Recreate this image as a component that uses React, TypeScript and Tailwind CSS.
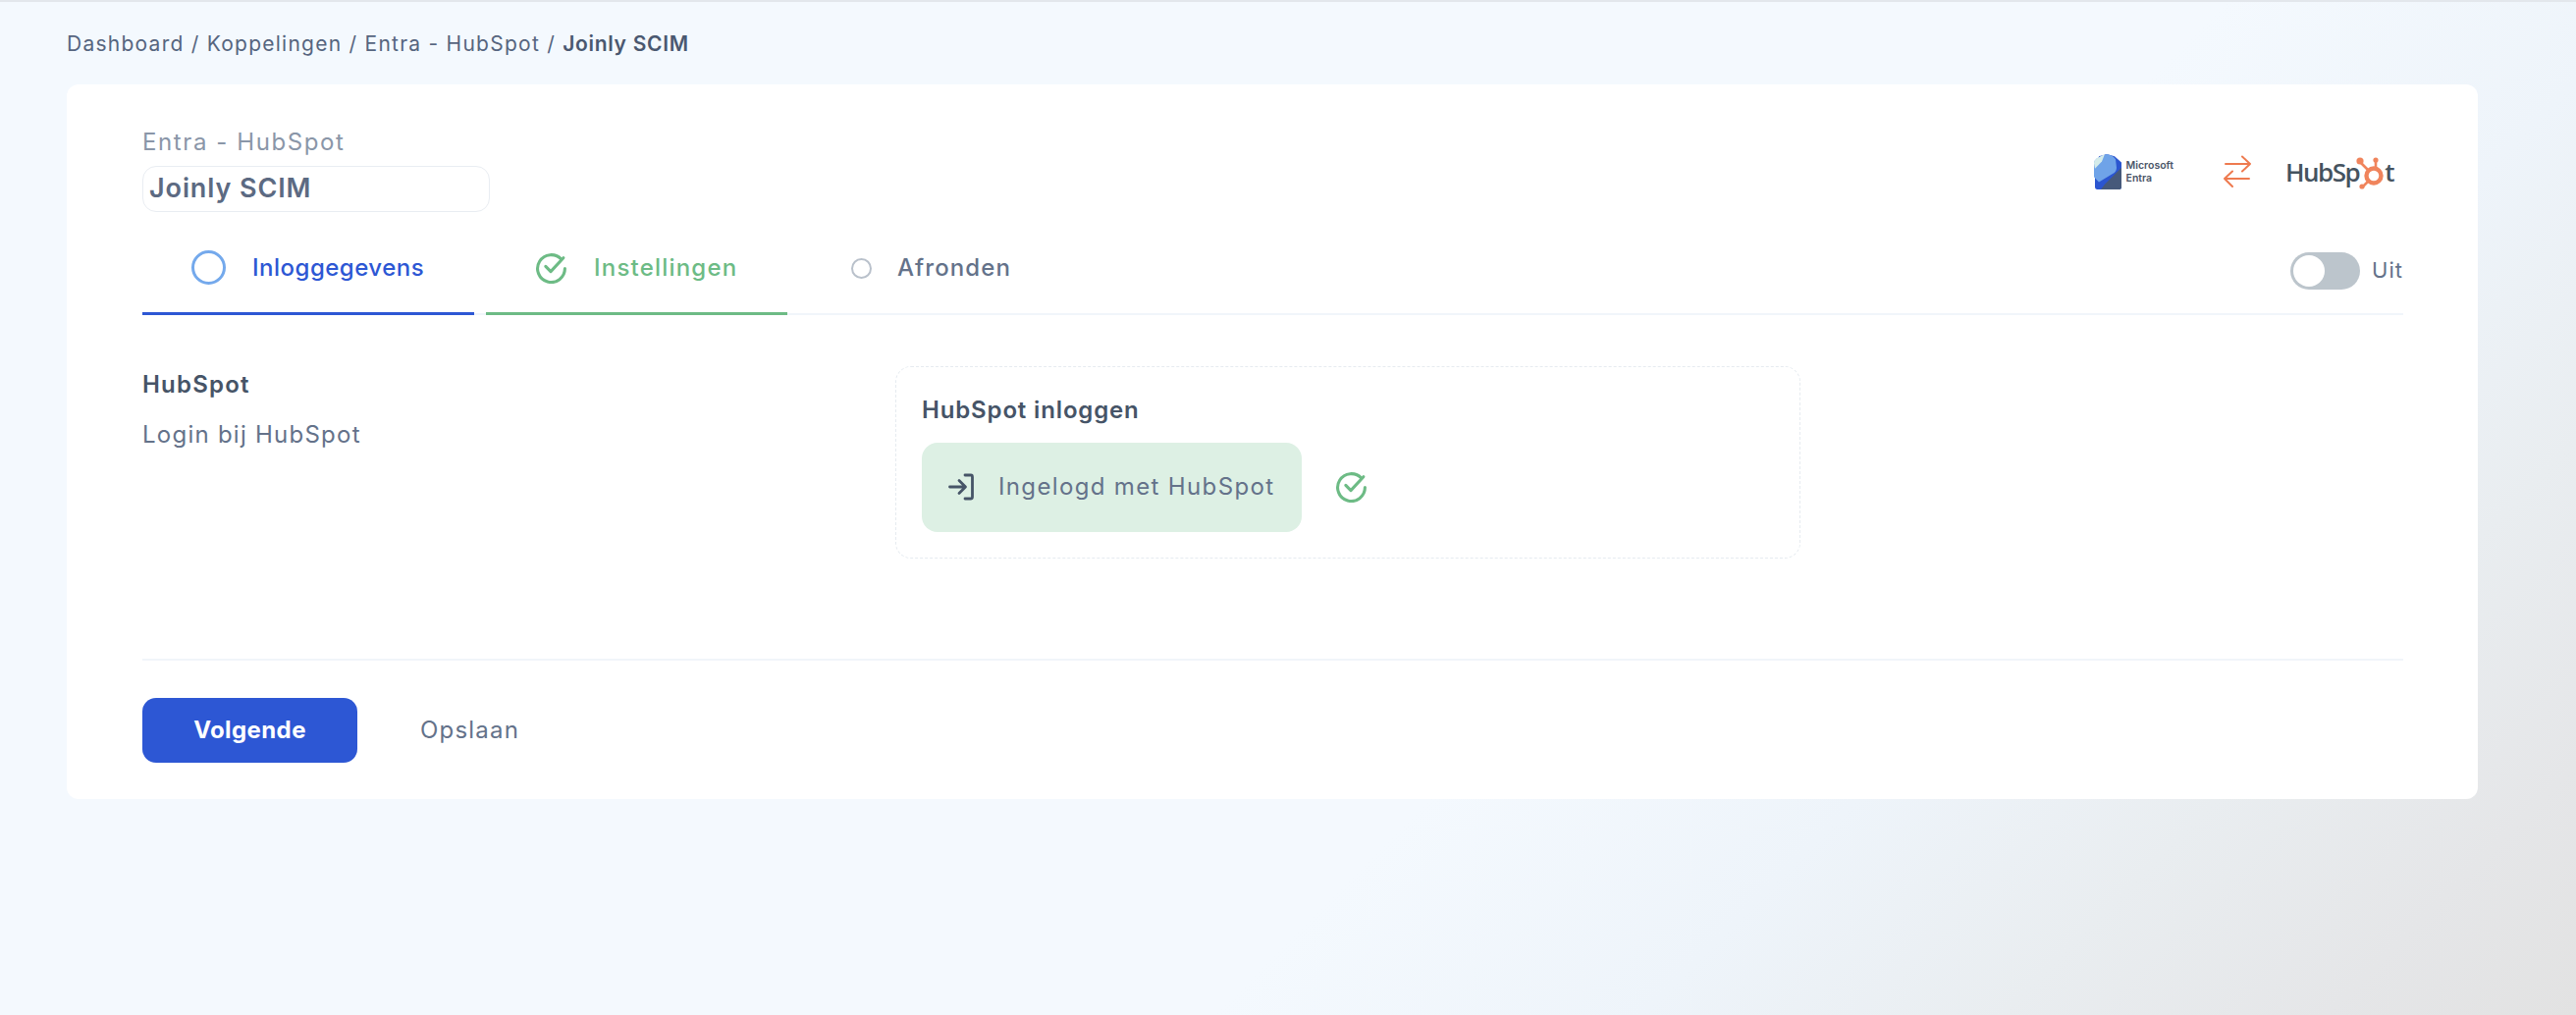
import React from 'react';

const FONT = "font-['Inter','Noto_Sans',sans-serif]";

const EntraLogo = () => (
  <div className="flex items-center gap-[4px]">
    <svg width="30" height="38" viewBox="0 0 30 36" preserveAspectRatio="none">
      <path d="M6 3 L14 1 L22 3 L29 9 L29 33 Q29 35 27 35 L4 35 Q2 35 2 33 L2 22 Z" fill="#2b55d0" />
      <path d="M12 30 L29 14 L29 33 Q29 35 27 35 L8 35 Z" fill="#46597a" />
      <path d="M1 10 Q1 7 4 5 L14 1 Q20 2 23 6 L24 14 Q24 18 20 20 L6 28 L1 23 Z" fill="#6fa3e8" />
      <path d="M1 10 Q1 7 4 5 L12 1 L9 8 L2 15 Z" fill="#d5ecea" />
    </svg>
    <div className="flex flex-col text-[10.5px] leading-[13px] font-semibold text-[#4a5568]">
      <span>Microsoft</span>
      <span>Entra</span>
    </div>
  </div>
);

const Sprocket = () => (
  <svg width="32" height="34" viewBox="0 0 32 34" className="mx-[-3px] mb-[-2px]">
    <g fill="none" stroke="#f0845c" strokeWidth="2.6" strokeLinecap="round">
      <circle cx="18" cy="20" r="7.5" strokeWidth="4.4" />
      <path d="M12 14 L4 6" />
      <path d="M20 11 L20 5" />
      <path d="M12 26 L7 31" />
    </g>
    <circle cx="4" cy="5" r="3.6" fill="#f0845c" />
    <circle cx="20" cy="4" r="2.6" fill="#f0845c" />
    <circle cx="6" cy="31" r="2.6" fill="#f0845c" />
  </svg>
);

const HubSpotLogo = () => (
  <div className="flex items-center text-[26px] leading-none font-semibold tracking-[-1.5px] text-[#45535f] font-['Open_Sans',sans-serif]">
    <span>HubSp</span>
    <Sprocket />
    <span>t</span>
  </div>
);

const SwapArrows = () => (
  <svg width="30" height="34" viewBox="0 0 30 34" fill="none" stroke="#ee7a4f" strokeWidth="2" strokeLinecap="round" strokeLinejoin="round">
    <path d="M3 9 L28 9 M20 1.5 L28 9 L20 16.5" />
    <path d="M27 24 L2 24 M10 16.5 L2 24 L10 32" />
  </svg>
);

const CheckCircle = ({ size }: { size: number }) => (
  <svg width={size} height={size} viewBox="0 0 32 32" fill="none" stroke="#6dbb85" strokeWidth="3" strokeLinecap="round" strokeLinejoin="round">
    <path d="M26 8 A13.5 13.5 0 1 0 29.5 17" />
    <path d="M10.5 15 L15.5 20 L28 6.5" />
  </svg>
);

const LoginIcon = () => (
  <svg width="26" height="28" viewBox="0 0 26 28" fill="none" stroke="#465467" strokeWidth="2.8" strokeLinecap="round" strokeLinejoin="round">
    <path d="M1.5 14 L17 14 M11 7.5 L17.5 14 L11 20.5" />
    <path d="M17 2 L23 2 Q24.5 2 24.5 4 L24.5 24 Q24.5 26 23 26 L17 26" />
  </svg>
);

const App: React.FC = () => {
  return (
    <div className={`${FONT} w-[2624px] h-[1034px] overflow-hidden border-t-2 border-[#e3e7ec] bg-[linear-gradient(135deg,#f4f9fe_0%,#f4f9fe_62%,#eef4fa_74%,#e9edf0_84%,#e5e6e8_93%,#e2e2e2_100%)] px-[68px]`}>
      {/* Breadcrumb */}
      <div className="flex h-[84px] items-center pt-[1px] text-[21px] text-[#56657f] tracking-[1.25px]">
        <span>Dashboard / Koppelingen / Entra - HubSpot /&nbsp;</span>
        <span className="font-semibold tracking-[0.7px] text-[#4a5870]">Joinly SCIM</span>
      </div>

      {/* Card */}
      <div className="w-[2456px] h-[728px] rounded-[12px] bg-white pl-[77px] pr-[76px] flex flex-col">
        <div className="flex justify-between pt-[44px]">
          <div className="flex flex-col">
            <span className="text-[24px] leading-[30px] tracking-[1.6px] text-[#8a96a8]">Entra - HubSpot</span>
            <div className="mt-[9px] flex h-[47px] w-[354px] items-center rounded-[14px] border border-[#e9edf2] pl-[6px] text-[27px] font-semibold tracking-[0.9px] text-[#5c6a82]">
              Joinly SCIM
            </div>
          </div>
          <div className="flex items-center h-[54px] mt-[18px] mr-[10px]">
            <EntraLogo />
            <div className="ml-[50px]"><SwapArrows /></div>
            <div className="ml-[34px]"><HubSpotLogo /></div>
          </div>
        </div>

        {/* Tabs */}
        <div className="mt-[21px] flex h-[84px] border-b-2 border-[#f1f5fa]">
          <div className="flex w-[338px] h-[84px] items-center gap-[27px] pl-[50px] pb-[10px] border-b-[3px] border-[#2d57d4] text-[24px] font-medium tracking-[0.5px] text-[#2d57d4]">
            <span className="h-[35px] w-[35px] rounded-full border-[3.5px] border-[#74a9ec]" />
            <span>Inloggegevens</span>
          </div>
          <div className="ml-[12px] flex w-[307px] h-[84px] items-center gap-[27px] pl-[50px] pb-[10px] border-b-[3px] border-[#6dbb85] text-[24px] font-medium tracking-[1.2px] text-[#6dbb85]">
            <CheckCircle size={33} />
            <span>Instellingen</span>
          </div>
          <div className="flex items-center gap-[26px] pl-[65px] pb-[10px] text-[24px] font-medium tracking-[1.1px] text-[#64728a]">
            <span className="h-[21px] w-[21px] rounded-full border-2 border-[#b9c1cb]" />
            <span>Afronden</span>
          </div>
          <div className="ml-auto flex items-center gap-[12px] pb-[5px] text-[22px] tracking-[1px] text-[#64728a]">
            <div className="flex h-[38px] w-[71px] items-center rounded-full bg-[#bcc5cc] pl-[3px]">
              <span className="h-[32px] w-[32px] rounded-full bg-white" />
            </div>
            <span>Uit</span>
          </div>
        </div>

        {/* Login section */}
        <div className="mt-[52px] flex h-[196px]">
          <div className="w-[767px] pt-[4px]">
            <div className="text-[24px] leading-[30px] font-semibold tracking-[1.2px] text-[#465467]">HubSpot</div>
            <div className="mt-[21px] text-[24px] leading-[30px] tracking-[1.25px] text-[#64728a]">Login bij HubSpot</div>
          </div>
          <div className="w-[922px] rounded-[16px] border border-dashed border-[#e6ebf0] pl-[26px] pt-[29px]">
            <div className="text-[24px] leading-[30px] font-semibold tracking-[0.85px] text-[#465467]">HubSpot inloggen</div>
            <div className="mt-[18px] flex items-center">
              <div className="flex h-[91px] w-[387px] items-center gap-[25px] rounded-[16px] bg-[#ddf0e4] pl-[27px] pb-[2px] text-[24px] tracking-[1.35px] text-[#64728a]">
                <LoginIcon />
                <span>Ingelogd met HubSpot</span>
              </div>
              <div className="ml-[34px] mb-[2px]"><CheckCircle size={33} /></div>
            </div>
          </div>
        </div>

        {/* Footer */}
        <div className="mt-[102px] border-t-2 border-[#f1f5fa] pt-[38px] flex items-center">
          <button className="h-[66px] w-[219px] rounded-[14px] bg-[#2d57d4] text-[24px] font-bold tracking-[0.4px] text-white">
            Volgende
          </button>
          <button className="ml-[64px] text-[24px] tracking-[1.2px] text-[#64728a]">Opslaan</button>
        </div>
      </div>
    </div>
  );
};

export default App;
